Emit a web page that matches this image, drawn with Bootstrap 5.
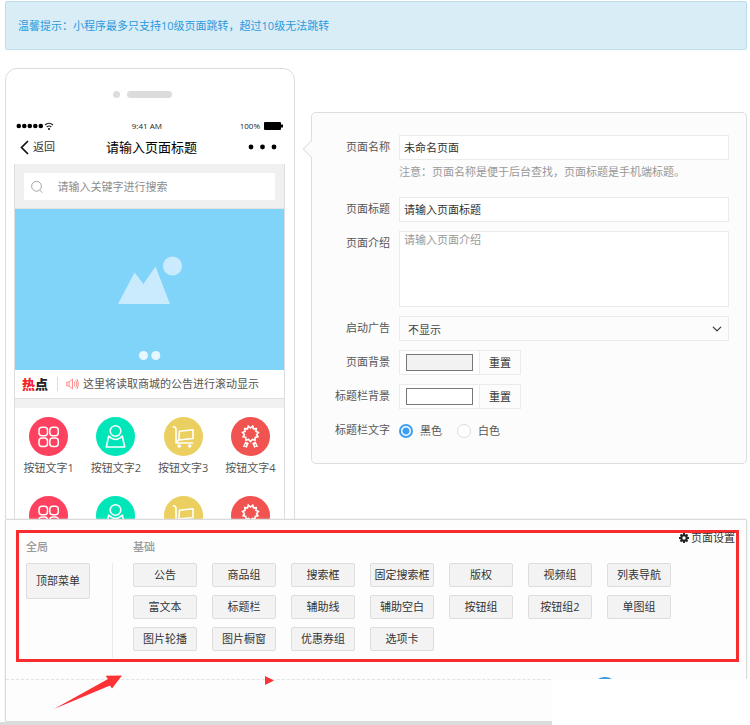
<!DOCTYPE html>
<html lang="zh-CN">
<head>
<meta charset="utf-8">
<meta name="viewport" content="width=device-width, initial-scale=1">
<title>页面设置</title>
<link href="https://cdn.jsdelivr.net/npm/bootstrap@5.3.0/dist/css/bootstrap.min.css" rel="stylesheet">
<style>
body{font-family:"Open Sans","Noto Sans CJK SC",sans-serif;font-size:11px;line-height:16px;color:#555;background:#fff}
.tip{background:#d9edf7;border:1px solid #bcdfeb;border-radius:2px;color:#2a9add;padding:16px 12px 15px;margin:1px 3px 0 5px}
.workspace{min-height:0;padding:18px 3px 0 5px;gap:16px}
.phone{flex:0 0 290px;border:1px solid #dcdcdc;border-radius:12px;padding:0 9px 0 8px;background:#fff}
.speaker{height:51px;gap:7px;padding:0 14px 0 0}
.speaker i{background:#dcdcdc;height:7px;border-radius:4px;width:7px}
.speaker i+i{width:45px}
.statusbar{font-size:8px;line-height:12px;color:#222;padding:0 2px}
.titlebar{height:32px;color:#333;padding:0 8px 2px 6px}
.titlebar h1{font-size:13px;line-height:18px;color:#000}
.screen{border:1px solid #ddd;border-width:0 1px}
.searchwrap{background:#f0f0f0;border-bottom:1px solid #e2e2e2;padding:9px 9px 8px}
.searchbox{background:#fff;height:27px;padding:0 7px}
.searchbox input{font-size:11px;line-height:16px;padding:0;margin-left:14px;color:#888}
.searchbox input::placeholder{color:#8c8c8c}
.banner{background:#80d4f9;height:161px}
.banner svg{display:block;width:100%;height:161px}
.notice{height:29px;border-bottom:1px solid #e0e0e0;padding:0 7px}
.notice b{font-size:13px;font-weight:900;color:#222;padding-right:9px;border-right:1px solid #ddd;line-height:14px}
.notice b span{color:#f5222d}
.band{background:#f1f1f1;height:9px}
.entry{padding:9px 0 11px;line-height:16px}
.entry svg{display:block;margin:0 auto 4px}
.settings{background:#fcfcfc;border:1px solid #dedede;border-radius:5px;margin-top:44px;padding:22px 17px 11px 0}
.settings::before{content:"";position:absolute;left:-7px;top:30px;width:12px;height:12px;background:#fcfcfc;border:solid #e0e0e0;border-width:0 0 1px 1px;transform:rotate(45deg)}
.field{margin-bottom:9px}
.field>.name{flex:0 0 78px;margin-right:9px;text-align:right;line-height:24px}
.field .form-control,.field .form-select{font-size:11px;line-height:16px;border:1px solid #ebebeb;border-radius:0;color:#333;padding:3px 4px;min-height:25px}
.field textarea.form-control{height:76px;padding-top:0;resize:none}
.field .form-control::placeholder{color:#999}
.field .form-select{padding:5px 8px 2px;background-color:#fcfcfc;background-size:10px 10px;background-position:right 6px center;color:#444}
.hint{color:#999;line-height:24px;padding-bottom:4px}
.swatch{border:1px solid #ebebeb;background:#fff;height:25px;padding:3px 6px}
.swatch input{width:67px;height:17px;padding:0;border:1px solid #777;background:none;appearance:none;display:block}
.swatch input::-webkit-color-swatch-wrapper{padding:0}
.swatch input::-webkit-color-swatch{border:0;border-radius:0}
.reset{font-size:11px;line-height:16px;border:1px solid #ebebeb;border-left:0;border-radius:0;padding:3px 9px;color:#333}
.pick{height:25px;gap:7px;margin-right:15px}
.pick .form-check-input{width:14px;height:14px;margin:0;border:1px solid #ddd;background-color:#fff}
.pick .form-check-input:checked{border:2px solid #3c9ff0;background:radial-gradient(circle,#3c9ff0 0 3px,#fff 4px)}
.dock{border-bottom:3px solid #dcdcdc}
.dockpanel{background:#fdfdfd;border:1px solid #dadada;border-radius:2px;margin:0 3px 0 5px;padding-top:10px;box-shadow:0 0 2px #ddd}
.frame{border:3px solid #f82c2f;margin:0 7px 17px 10px;padding:0 1px 0 7px;min-height:132px}
.grouptitle{font-size:11px;line-height:16px;color:#999;padding-top:6px;margin:0 0 8px}
.tool{width:64px;height:24px;font-size:11px;line-height:16px;padding:0;white-space:nowrap;border:1px solid #ddd;border-radius:2px;background:#f3f3f3;color:#333}
.tool.tall{height:36px}
.tools{gap:8px 15px}
.rule{width:1px;background:#ebebeb;margin:30px 20px 0 22px;height:95px}
.pageset{color:#333;white-space:nowrap;line-height:12px;gap:2px;height:9px}
.dockfoot{border-top:1px dashed #e2e2e2;height:42px}
.blank{right:0;bottom:-3px;width:198px;height:46px;background:#fff}
.arrow{left:54px;bottom:12px}
.marker{left:265px;bottom:37px}
.dome{left:598px;bottom:43px}
</style>
</head>
<body>
<svg width="0" height="0" class="position-absolute" aria-hidden="true">
<defs>
<g id="g1"><circle cx="19.500" cy="19.500" r="19.500" fill="#ff4160"/><g fill="none" stroke="#fff" stroke-width="1.500"><rect x="10" y="10.200" width="8.500" height="8.500" rx="3"/><rect x="20.800" y="10.200" width="8.500" height="8.500" rx="3"/><rect x="10" y="21" width="8.500" height="8.500" rx="3"/><rect x="20.800" y="21" width="8.500" height="8.500" rx="3"/></g></g>
<g id="g2"><circle cx="19.500" cy="19.500" r="19.500" fill="#00e6b8"/><g fill="none" stroke="#fff" stroke-width="1.600" stroke-linejoin="round"><circle cx="19.500" cy="14" r="5.300"/><path d="M12.700 19L10.300 30h18.400L26.300 19Q19.500 26 12.700 19z"/></g></g>
<g id="g3"><circle cx="19.500" cy="19.500" r="19.500" fill="#ebcf60"/><g fill="none" stroke="#fff" stroke-width="1.600" stroke-linejoin="round" stroke-linecap="round"><path d="M9.300 9.800Q12 10 12 12.500V26H28.500M12.500 25.500l2-2.500M15.500 14.200L29 12.800V21.500L14.800 23z"/></g><circle cx="15.200" cy="29" r="1.800" fill="#fff"/><circle cx="25.700" cy="29" r="1.800" fill="#fff"/></g>
<g id="g4"><circle cx="19.500" cy="19.500" r="19.500" fill="#f15450"/><path fill="none" stroke="#fff" stroke-width="1.600" d="M19.500 11l2.200-1.800.8 2.600 2.800-.2-.4 2.700 2.500 1.200-1.800 2 1.300 2.300-2.700.7-.2 2.700-2.600-.7-1.900 2-1.900-2-2.600.7-.2-2.700-2.700-.7 1.300-2.300-1.800-2 2.500-1.200-.4-2.700 2.800.2.800-2.600z"/><path fill="#fff" d="M14.300 24.500l3.500 1.500-2 5-1.600-1.200-2.400.2zM24.700 24.500l-3.500 1.500 2 5 1.600-1.200 2.400.2z"/><circle cx="14.600" cy="28" r=".8" fill="#f15450"/><circle cx="24.400" cy="28" r=".8" fill="#f15450"/></g>
</defs>
</svg>

<div class="vh-100 d-flex flex-column overflow-hidden">
  <div class="tip alert mb-0" role="alert">温馨提示：小程序最多只支持10级页面跳转，超过10级无法跳转</div>

  <main class="workspace d-flex flex-grow-1 align-items-start overflow-hidden">
    <section class="phone" aria-label="预览">
      <div class="speaker d-flex justify-content-center align-items-center"><i></i><i></i></div>
      <div class="statusbar d-flex justify-content-between align-items-center">
        <svg width="38" height="10" viewBox="0 0 38 10"><g fill="#000"><circle cx="2.800" cy="5" r="2.300"/><circle cx="8.300" cy="5" r="2.300"/><circle cx="13.800" cy="5" r="2.300"/><circle cx="19.300" cy="5" r="2.300"/><circle cx="24.800" cy="5" r="2.300"/><circle cx="33" cy="8" r="1"/></g><g fill="none" stroke="#222" stroke-width="1.200"><path d="M29 4q4-3.500 8 0M30.700 6q2.300-2 4.600 0"/></g></svg>
        <span>9:41 AM</span>
        <span class="d-flex align-items-center gap-1">100% <svg width="19" height="8" viewBox="0 0 19 8"><rect width="17" height="8" rx="1"/><rect x="17" y="2.500" width="2" height="3"/></svg></span>
      </div>
      <div class="titlebar d-flex justify-content-between align-items-center">
        <span class="d-flex align-items-center gap-1"><svg width="9" height="15" viewBox="0 0 9 15" fill="none" stroke="#111" stroke-width="1.700"><path d="M8 1L1.500 7.500 8 14"/></svg>返回</span>
        <h1 class="m-0 fw-normal">请输入页面标题</h1>
        <svg width="29" height="6" viewBox="0 0 29 6"><circle cx="3" cy="3" r="2.400"/><circle cx="14.500" cy="3" r="2.400"/><circle cx="26" cy="3" r="2.400"/></svg>
      </div>
      <div class="screen">
        <div class="searchwrap"><label class="searchbox d-flex align-items-center">
          <svg width="14" height="14" viewBox="0 0 14 14" fill="none" stroke="#999" stroke-width="1"><circle cx="6.200" cy="6.200" r="5.500"/><path d="M10 10.500l3 3"/></svg>
          <input class="border-0 bg-transparent w-100" type="text" placeholder="请输入关键字进行搜索" aria-label="搜索">
        </label></div>
        <div class="banner"><svg viewBox="0 0 269 161" aria-hidden="true"><path d="M103 95L119.500 63.500 128.500 75 140.500 57.500 155 95z" fill="#c9ebfd"/><circle cx="157.500" cy="57" r="9.600" fill="#c9ebfd"/><circle cx="128.500" cy="146.500" r="4.500" fill="#e8f7fe"/><circle cx="140.800" cy="146.500" r="4.500" fill="#e8f7fe"/></svg></div>
        <div class="notice d-flex align-items-center">
          <b><span>热</span>点</b>
          <svg class="ms-2 me-1" width="13" height="12" viewBox="0 0 13 12" fill="none" stroke="#fb8f8f" stroke-width="1"><path d="M3 4H.7v4H3M3 4l3.500-3v10L3 8zM8.200 3.800q1.600 2.200 0 4.400M9.700 2.200q2.700 3.800 0 7.600M11 .8q3 5.200 0 10.400"/></svg>
          <span class="text-nowrap">这里将读取商城的公告进行滚动显示</span>
        </div>
        <div class="band"></div>
        <div class="row row-cols-4 g-0 text-center">
          <div class="col entry"><svg width="39" height="39"><use href="#g1"/></svg>按钮文字1</div>
          <div class="col entry"><svg width="39" height="39"><use href="#g2"/></svg>按钮文字2</div>
          <div class="col entry"><svg width="39" height="39"><use href="#g3"/></svg>按钮文字3</div>
          <div class="col entry"><svg width="39" height="39"><use href="#g4"/></svg>按钮文字4</div>
          <div class="col entry"><svg width="39" height="39"><use href="#g1"/></svg></div>
          <div class="col entry"><svg width="39" height="39"><use href="#g2"/></svg></div>
          <div class="col entry"><svg width="39" height="39"><use href="#g3"/></svg></div>
          <div class="col entry"><svg width="39" height="39"><use href="#g4"/></svg></div>
        </div>
      </div>
    </section>

    <form class="settings position-relative flex-grow-1">
      <div class="field d-flex"><label class="name" for="pname">页面名称</label><div class="flex-grow-1"><input id="pname" class="form-control" type="text" value="未命名页面"><div class="hint">注意：页面名称是便于后台查找，页面标题是手机端标题。</div></div></div>
      <div class="field d-flex"><label class="name" for="ptitle">页面标题</label><input id="ptitle" class="form-control" type="text" value="请输入页面标题"></div>
      <div class="field d-flex"><label class="name" for="pdesc">页面介绍</label><textarea id="pdesc" class="form-control" placeholder="请输入页面介绍"></textarea></div>
      <div class="field d-flex"><label class="name" for="pad">启动广告</label><select id="pad" class="form-select"><option>不显示</option></select></div>
      <div class="field d-flex"><label class="name" for="bg1">页面背景</label><div class="swatch"><input id="bg1" type="color" value="#f2f2f2"></div><button type="button" class="btn reset">重置</button></div>
      <div class="field d-flex"><label class="name" for="bg2">标题栏背景</label><div class="swatch"><input id="bg2" type="color" value="#ffffff"></div><button type="button" class="btn reset">重置</button></div>
      <div class="field d-flex" role="radiogroup" aria-label="标题栏文字"><span class="name">标题栏文字</span>
        <label class="pick d-flex align-items-center"><input class="form-check-input" type="radio" name="tc" checked>黑色</label>
        <label class="pick d-flex align-items-center"><input class="form-check-input" type="radio" name="tc">白色</label>
      </div>
    </form>
  </main>

  <footer class="dock position-relative">
    <div class="dockpanel">
      <div class="frame d-flex align-items-start">
        <div><h2 class="grouptitle">全局</h2><button type="button" class="btn tool tall">顶部菜单</button></div>
        <div class="rule flex-shrink-0"></div>
        <div class="flex-grow-1"><h2 class="grouptitle">基础</h2>
          <div class="tools d-flex flex-wrap">
            <button type="button" class="btn tool">公告</button>
            <button type="button" class="btn tool">商品组</button>
            <button type="button" class="btn tool">搜索框</button>
            <button type="button" class="btn tool">固定搜索框</button>
            <button type="button" class="btn tool">版权</button>
            <button type="button" class="btn tool">视频组</button>
            <button type="button" class="btn tool">列表导航</button>
            <button type="button" class="btn tool">富文本</button>
            <button type="button" class="btn tool">标题栏</button>
            <button type="button" class="btn tool">辅助线</button>
            <button type="button" class="btn tool">辅助空白</button>
            <button type="button" class="btn tool">按钮组</button>
            <button type="button" class="btn tool">按钮组2</button>
            <button type="button" class="btn tool">单图组</button>
            <button type="button" class="btn tool">图片轮播</button>
            <button type="button" class="btn tool">图片橱窗</button>
            <button type="button" class="btn tool">优惠券组</button>
            <button type="button" class="btn tool">选项卡</button>
          </div>
        </div>
        <a href="#" class="pageset d-flex align-items-center text-decoration-none"><svg width="10" height="10" viewBox="0 0 10 10"><circle cx="5" cy="5" r="2.700" fill="none" stroke="#222" stroke-width="2"/><path d="M5 0v2M5 8v2M0 5h2M8 5h2M1.500 1.500l1.300 1.300M7.200 7.200l1.300 1.300M1.500 8.500l1.300-1.300M7.200 2.800l1.300-1.300" stroke="#222" stroke-width="2"/></svg>页面设置</a>
      </div>
      <div class="dockfoot"></div>
    </div>
    <div class="blank position-absolute"></div>
    <svg class="dome position-absolute" width="14" height="2" viewBox="0 0 14 2"><circle cx="7" cy="13" r="13" fill="#3b97dd"/></svg>
    <svg class="arrow position-absolute" width="69" height="35" viewBox="0 0 69 35"><path d="M0 34L54 4 51.500.8 68 .5 58 13.500 56 10.500z" fill="#fd3235"/></svg>
    <svg class="marker position-absolute" width="9" height="9" viewBox="0 0 9 9"><path d="M0 0l9 4.500L0 9z" fill="#fd3235"/></svg>
  </footer>
</div>
<script src="https://cdn.jsdelivr.net/npm/bootstrap@5.3.0/dist/js/bootstrap.bundle.min.js"></script>
</body>
</html>
